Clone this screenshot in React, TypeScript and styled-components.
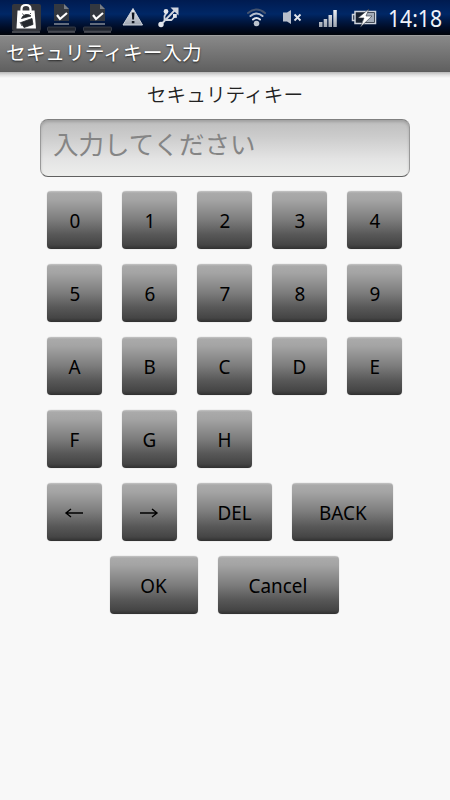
import React from "react";
import styled, { createGlobalStyle } from "styled-components";

const GlobalStyle = createGlobalStyle`
  html, body { margin: 0; background: #f8f8f8; }
  * { box-sizing: border-box; }
`;

const Screen = styled.div`
  width: 450px;
  height: 800px;
  overflow: hidden;
  background: #f8f8f8;
  font-family: "Noto Sans", "Noto Sans CJK JP", sans-serif;
  color: #000;
`;

const StatusBar = styled.header`
  height: 35px;
  display: flex;
  align-items: flex-start;
  background: linear-gradient(#001b50 0, #002766 14px, #001a48 20px, #000d28 27px, #000511 33px, #02050a 35px);
`;

const StatusIcons = styled.svg`
  display: block;
  flex: none;
  width: 384px;
  height: 35px;
`;

const Clock = styled.time`
  padding-left: 4px;
  font: 23.5px/36px "Noto Sans", sans-serif;
  color: #f0f3fa;
  white-space: nowrap;
  transform: scaleX(0.9);
  transform-origin: 4px 50%;
`;

const TitleBar = styled.div`
  height: 37px;
  padding-left: 6px;
  border-top: 1px solid #a0a0a0;
  border-bottom: 1px solid #5c5c5c;
  background: linear-gradient(#898989, #606060);
  font: 400 19.7px/32px "Noto Sans CJK JP", sans-serif;
  color: #fff;
  text-shadow: 0 1px 2px rgba(0, 0, 0, 0.7);
  white-space: nowrap;
`;

const TitleShadow = styled.div`
  height: 6px;
  background: linear-gradient(#b8b8b8, #e0e0e0 50%, #f8f8f8);
`;

const Form = styled.main`
  display: flex;
  flex-direction: column;
`;

const Label = styled.label`
  height: 41px;
  font: 350 19.7px/32px "Noto Sans CJK JP", sans-serif;
  color: #222;
  text-align: center;
`;

const KeyField = styled.input`
  width: 370px;
  height: 58px;
  margin: 0 0 0 40px;
  padding: 0 12px 12px;
  border: 1px solid #999;
  border-top-color: #808080;
  border-bottom-color: #606060;
  border-radius: 8px;
  outline: none;
  background: linear-gradient(#bebebe, #cccccc 30%, #e4e4e4 70%, #edeeec);
  box-shadow: inset 0 2px 3px rgba(0, 0, 0, 0.16);
  font: 400 25.5px "Noto Sans CJK JP", sans-serif;
  &::placeholder { color: #858585; opacity: 1; }
`;

const Keypad = styled.div`
  display: flex;
  flex-direction: column;
  gap: 15px;
  padding-top: 14px;
`;

const KeyRow = styled.div<{ $inset?: number }>`
  display: flex;
  gap: 20px;
  padding-left: ${({ $inset }) => $inset ?? 47.4}px;
`;

const Key = styled.button<{ $width?: number }>`
  width: ${({ $width }) => $width ?? 55}px;
  height: 58px;
  padding: 0 1px 0 0;
  border: 0;
  border-radius: 4px;
  background: linear-gradient(#c4c4c4 0, #aaaaaa 2px, #a4a4a4 9px, #7c7c7c 50%, #585858 75%, #454545 93%, #303030 100%);
  box-shadow: 0 0 1px rgba(0, 0, 0, 0.35);
  font: 20.5px/58px "Noto Sans", sans-serif;
  color: #000;
`;

const Caption = styled.span`
  display: inline-block;
  transform: scaleX(0.92);
  white-space: nowrap;
`;

const Arrow = styled.svg`
  display: block;
  margin: 1px auto 0;
  width: 20px;
  height: 10px;
  fill: none;
  stroke: #000;
  stroke-width: 1.4;
`;

const characterRows = ["01234", "56789", "ABCDE", "FGH"];

function DownloadDone({ x }: { x: number }) {
  return (
    <g transform={`translate(${x} 0)`}>
      <path d="M7 4h10l5 5v12H7z" fill="#333840" />
      <path d="M17 4v5h5z" fill="#777d86" />
      <path d="M10 15l3 4 7-6" fill="none" stroke="#fff" strokeWidth="2.2" />
      <path d="M7 24h15" stroke="#a4a8ae" strokeWidth="1.2" />
      <rect x="0.5" y="27" width="28" height="4" rx="1" fill="#20242d" stroke="#3e444f" strokeWidth=".8" />
      <path d="M1 32h27" stroke="#77777a" />
    </g>
  );
}

function Indicators() {
  return (
    <StatusIcons viewBox="0 0 384 35" aria-hidden="true">
      <defs>
        <linearGradient id="metal" x2="0" y2="1">
          <stop stopColor="#eef1f6" />
          <stop offset="1" stopColor="#9da4b0" />
        </linearGradient>
      </defs>
      <rect x="12" y="4" width="29" height="27" rx="2" fill="#34363c" />
      <path d="M12 32h28" stroke="#888" />
      <path d="M21.500 12V9q0-4 4.500-4t4.500 4v3" fill="none" stroke="#fff" strokeWidth="2.200" />
      <path d="M17.500 10.500h17l1.500 18H16.500z" fill="#fff" />
      <path d="M21.500 18.500q1-3 4-4 4-.5 5.500 1.500zM21 22.500l11-4 1 6-9 3zM20 22l2 4M30 14l1-1M23.500 15l-1-1.500" fill="#25282d" stroke="#25282d" strokeWidth=".8" />
      <DownloadDone x={47} />
      <DownloadDone x={83} />
      <path d="M133 8.500l9.500 16.500h-19.500z" fill="url(#metal)" stroke="#cbd0d9" strokeLinejoin="round" />
      <path d="M131.700 12.500h2.800l-.5 7h-1.800zM131.800 21h2.600v2.300h-2.600z" fill="#10151f" />
      <g fill="none" stroke="#d1d6df" strokeWidth="1.800" strokeLinejoin="round">
        <path d="M161 24.500L175 10M164.500 21v-5l2.500-4M166 20h5.500l3.500-4" />
      </g>
      <path d="M170.500 7.500h8v8z" fill="#d1d6df" />
      <g fill="#e2e5eb">
        <circle cx="161" cy="24.500" r="2.700" />
        <circle cx="166" cy="11.500" r="2.400" />
        <rect x="173" y="14" width="3.800" height="3.800" />
      </g>
      <g fill="none" strokeLinecap="round">
        <path d="M248 13q8.500-7 17 0" stroke="#43536f" strokeWidth="2" />
        <path d="M250.500 16q6-5 12 0" stroke="#b6bfce" strokeWidth="2" />
        <path d="M253 19.500q3.500-3 7 0" stroke="#e3e7ed" strokeWidth="2" />
      </g>
      <circle cx="256.500" cy="23.500" r="2.800" fill="#bcc3ce" />
      <path d="M283 12.500h4l4-2.500v14l-4-2.500h-4z" fill="#b8bfcb" />
      <path d="M294.500 14.500l6 6m0-6l-6 6" stroke="#e1e5eb" strokeWidth="1.800" />
      <path d="M319 22h3.500v5H319zM323.700 19h3.500v8h-3.500zM328.500 15h3.500v12h-3.500zM333.300 10h3.500v17h-3.500z" fill="url(#metal)" />
      <path d="M355 11.500h20.500v12H355zM354.500 14.500h-2v6h2" fill="#17202f" stroke="#ced3dc" strokeWidth="1.500" />
      <path d="M367 13h7v9h-12z" fill="#a4acb9" />
      <path d="M369 9L358 18h6l-3.500 9L372 16h-6z" fill="#fff" stroke="#31363f" strokeWidth=".6" />
    </StatusIcons>
  );
}

export default function App() {
  return (
    <Screen>
      <GlobalStyle />
      <StatusBar>
        <Indicators />
        <Clock>14:18</Clock>
      </StatusBar>
      <TitleBar>セキュリティキー入力</TitleBar>
      <TitleShadow />
      <Form>
        <Label htmlFor="security-key">セキュリティキー</Label>
        <KeyField id="security-key" placeholder="入力してください" />
        <Keypad>
          {characterRows.map((row) => (
            <KeyRow key={row}>
              {row.split("").map((character) => (
                <Key key={character}><Caption>{character}</Caption></Key>
              ))}
            </KeyRow>
          ))}
          <KeyRow>
            <Key aria-label="Left">
              <Arrow viewBox="0 0 20 10"><path d="M19 5H2M7 1L2 5l5 4" /></Arrow>
            </Key>
            <Key aria-label="Right">
              <Arrow viewBox="0 0 20 10"><path d="M1 5h17M13 1l5 4-5 4" /></Arrow>
            </Key>
            <Key $width={75}><Caption>DEL</Caption></Key>
            <Key $width={101}><Caption>BACK</Caption></Key>
          </KeyRow>
          <KeyRow $inset={110}>
            <Key $width={88}><Caption>OK</Caption></Key>
            <Key $width={121}><Caption>Cancel</Caption></Key>
          </KeyRow>
        </Keypad>
      </Form>
    </Screen>
  );
}
